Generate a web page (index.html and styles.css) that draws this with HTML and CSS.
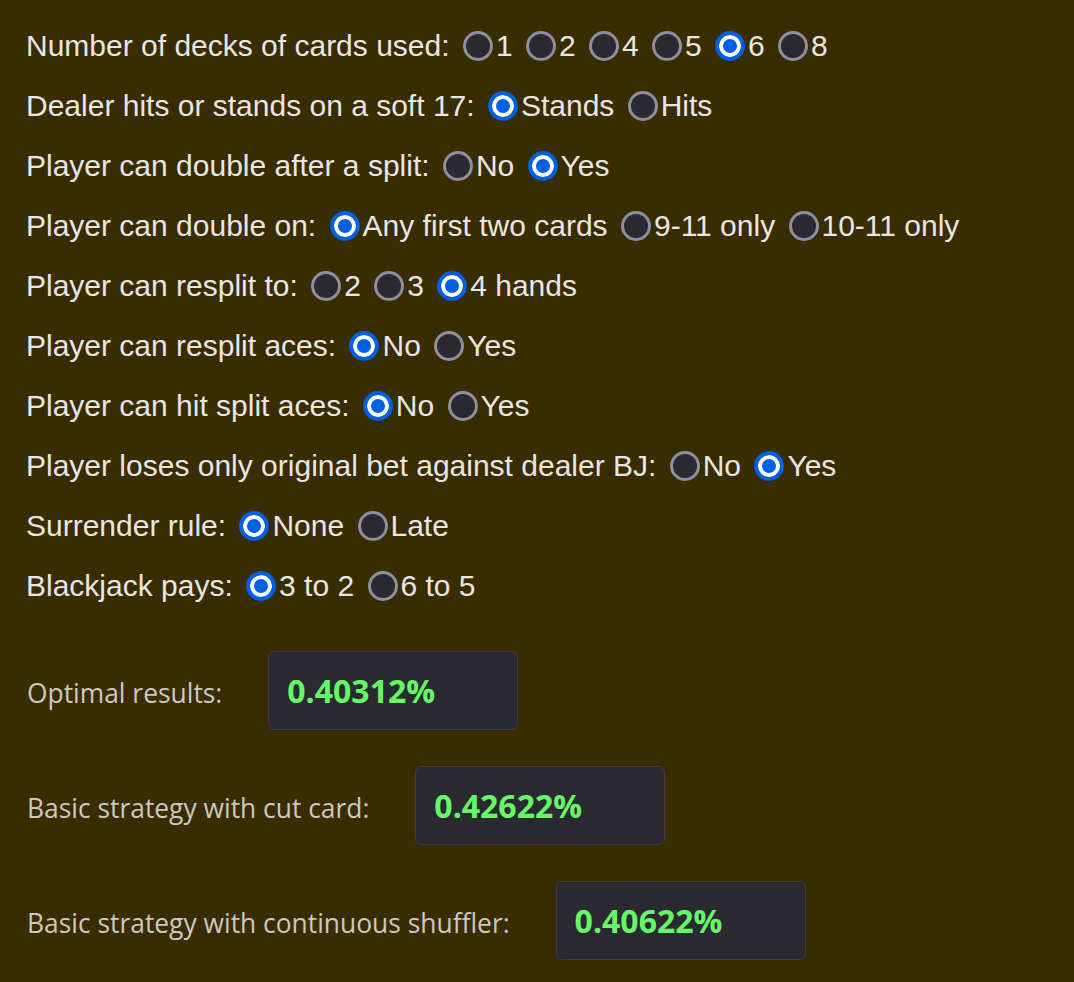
FILE: index.html
```html
<!DOCTYPE html>
<html>
<head>
<meta charset="utf-8">
<link rel="stylesheet" href="styles.css">
</head>
<body>
<div class="page">
  <div class="rules">
    <div class="row">Number of decks of cards used: <label><input type="radio" name="decks">1</label> <label><input type="radio" name="decks">2</label> <label><input type="radio" name="decks">4</label> <label><input type="radio" name="decks">5</label> <label><input type="radio" name="decks" checked>6</label> <label><input type="radio" name="decks">8</label></div>
    <div class="row">Dealer hits or stands on a soft 17: <label><input type="radio" name="s17" checked>Stands</label> <label><input type="radio" name="s17">Hits</label></div>
    <div class="row">Player can double after a split: <label><input type="radio" name="das">No</label> <label><input type="radio" name="das" checked>Yes</label></div>
    <div class="row">Player can double on: <label><input type="radio" name="dbl" checked>Any first two cards</label> <label><input type="radio" name="dbl">9-11 only</label> <label><input type="radio" name="dbl">10-11 only</label></div>
    <div class="row">Player can resplit to: <label><input type="radio" name="rs">2</label> <label><input type="radio" name="rs">3</label> <label><input type="radio" name="rs" checked>4 hands</label></div>
    <div class="row">Player can resplit aces: <label><input type="radio" name="rsa" checked>No</label> <label><input type="radio" name="rsa">Yes</label></div>
    <div class="row">Player can hit split aces: <label><input type="radio" name="hsa" checked>No</label> <label><input type="radio" name="hsa">Yes</label></div>
    <div class="row">Player loses only original bet against dealer BJ: <label><input type="radio" name="obo">No</label> <label><input type="radio" name="obo" checked>Yes</label></div>
    <div class="row">Surrender rule: <label><input type="radio" name="sur" checked>None</label> <label><input type="radio" name="sur">Late</label></div>
    <div class="row">Blackjack pays: <label><input type="radio" name="bj" checked>3 to 2</label> <label><input type="radio" name="bj">6 to 5</label></div>
  </div>
  <div class="results">
    <div class="result"><span class="result-label">Optimal results:</span><span class="result-value">0.40312%</span></div>
    <div class="result"><span class="result-label">Basic strategy with cut card:</span><span class="result-value">0.42622%</span></div>
    <div class="result"><span class="result-label">Basic strategy with continuous shuffler:</span><span class="result-value">0.40622%</span></div>
  </div>
</div>
</body>
</html>
```

FILE: styles.css
```css
html, body {
  margin: 0;
  padding: 0;
  background: #382c00;
}

.page {
  padding: 16px 27px 0 27px;
  min-height: 982px;
  box-sizing: border-box;
}

.rules {
  margin-left: -1px;
  font-family: "Liberation Sans", Arial, sans-serif;
  font-size: 30px;
  color: #e8e6e3;
}

.row {
  line-height: 60px;
  height: 60px;
  white-space: nowrap;
}

.row label {
  white-space: nowrap;
}

.row input[type="radio"] {
  -webkit-appearance: none;
  appearance: none;
  box-sizing: border-box;
  width: 30px;
  height: 30px;
  margin: 0 3px 0 5px;
  border-radius: 50%;
  border: 3px solid #8f8f9d;
  background: #2b2a33;
  vertical-align: -5px;
}

.row input[type="radio"]:checked {
  border: 4px solid #0060df;
  background: #0060df;
  box-shadow: inset 0 0 0 4px #ffffff;
}

.results {
  margin-top: 35px;
  font-family: "Open Sans", sans-serif;
}

.result {
  margin-bottom: 36px;
  white-space: nowrap;
}

.result-label {
  font-size: 26.4px;
  color: #cdc8c0;
  margin-right: 46px;
}

.result-value {
  display: inline-block;
  box-sizing: border-box;
  width: 250px;
  padding: 17px 18px;
  font-size: 32px;
  font-weight: 700;
  color: #66f966;
  background: #2b2a33;
  border: 1px solid #3d3c45;
  border-radius: 6px;
}
```
